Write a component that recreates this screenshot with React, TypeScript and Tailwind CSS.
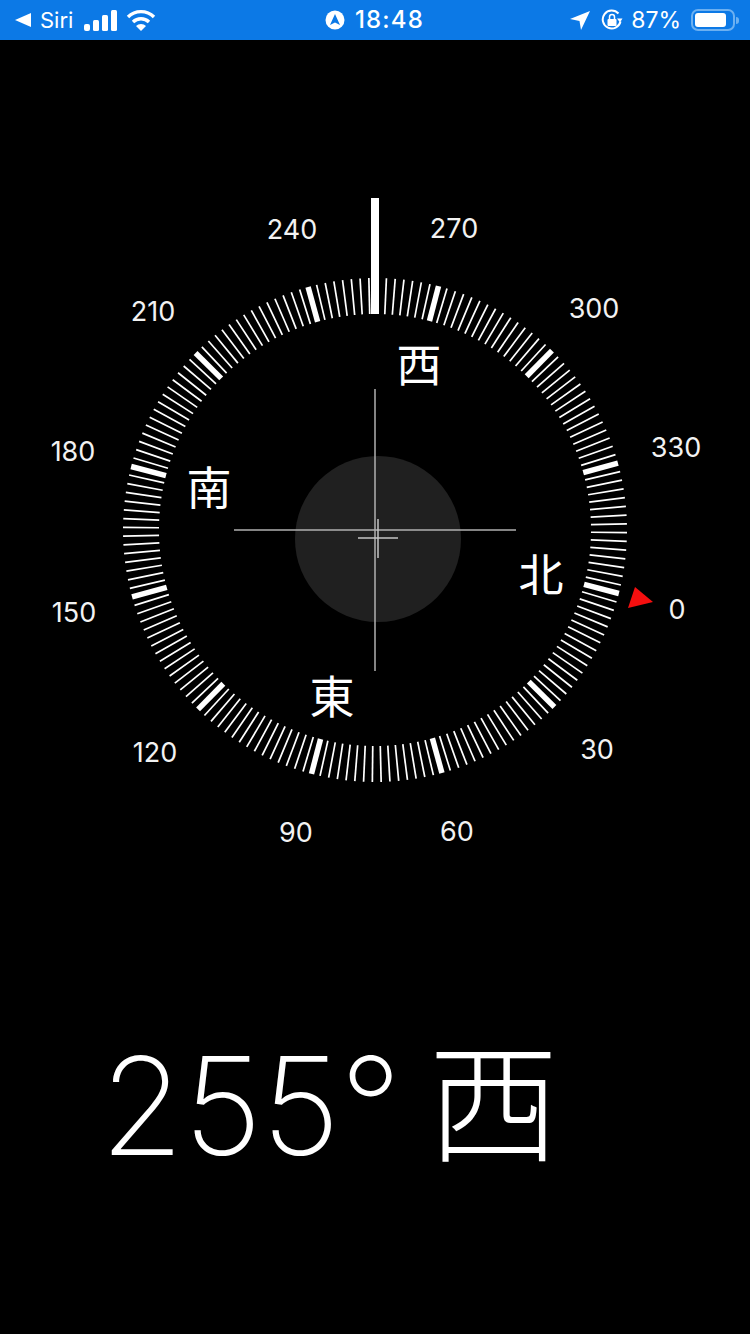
const HEADING = 255.4;
const CX = 375;
const CY = 530;

// degree labels sit at hand-read positions, relative to the page
const LABELS: [string, number, number][] = [
  ["240", 292, 229], ["270", 454, 228], ["210", 153, 311], ["300", 594, 308],
  ["180", 73, 451], ["330", 676, 447], ["150", 74, 612], ["0", 677, 609],
  ["120", 155, 752], ["30", 597, 749], ["90", 296, 832], ["60", 457, 831],
];

const CARDINALS: [string, number, number][] = [
  ["西", 419, 362], ["南", 209, 485], ["北", 541, 572], ["東", 332, 694],
];

function StatusBar() {
  return (
    <div className="flex h-10 items-center bg-[#0c79e6] text-white font-['Inter','Liberation_Sans',sans-serif]">
      <div className="flex flex-1 items-center">
        <svg width="16" height="14" viewBox="0 0 16 14" className="ml-[15px]"><path d="M0 7 16 0v14z" fill="#fff" /></svg>
        <span className="ml-[9px] text-[22px] leading-none font-normal">Siri</span>
        <svg width="33" height="21" viewBox="0 0 33 21" className="ml-[11px]" fill="#fff">
          <rect x="0" y="14" width="6" height="7" rx="2" />
          <rect x="9" y="10" width="6" height="11" rx="1.5" />
          <rect x="18" y="5" width="6" height="16" rx="1.5" />
          <rect x="27" y="0" width="6" height="21" rx="1.5" />
        </svg>
        <svg width="30" height="22" viewBox="0 0 30 22" className="ml-[9px]" fill="none" stroke="#fff" strokeWidth="3.4">
          <path d="M2 8a18.5 18.5 0 0 1 26 0" />
          <path d="M7 13a11.5 11.5 0 0 1 16 0" />
          <path d="M15 22l-5-5a7 7 0 0 1 10 0z" fill="#fff" stroke="none" />
        </svg>
      </div>
      <div className="flex items-center gap-[10px] pl-[10px]">
        <svg width="20" height="20" viewBox="0 0 20 20">
          <circle cx="10" cy="10" r="9.5" fill="#fff" />
          <path d="M10 4 15 15 10 12.5 5 15z" fill="#0c79e6" />
        </svg>
        <span className="text-[24px] leading-none font-medium tracking-[1.2px]">18:48</span>
      </div>
      <div className="flex flex-1 items-center justify-end pr-[11px]">
        <svg width="20" height="20" viewBox="0 0 20 20" fill="#fff"><path d="M20 1 11 20 9.5 11 0 9z" /></svg>
        <svg width="22" height="22" viewBox="0 0 22 22" className="ml-[11px]" fill="none" stroke="#fff" strokeWidth="2">
          <path d="M19.5 12.5A9 9 0 1 1 17.5 4.5" />
          <path d="M21.5 9.5 19 13.5 16 9.5z" fill="#fff" stroke="none" />
          <rect x="6.5" y="10" width="9" height="7" rx="1" fill="#fff" stroke="none" />
          <path d="M8.5 10V8a2.5 2.5 0 0 1 5 0v2" strokeWidth="1.5" />
        </svg>
        <span className="ml-[8px] text-[23px] leading-none font-normal">87%</span>
        <div className="ml-[10px] flex h-[22px] w-[44px] items-center rounded-[7px] border-2 border-[#6cb0f1] p-[2px]">
          <div className="h-full w-[87%] rounded-[3px] bg-white" />
        </div>
        <div className="ml-[1px] h-[7px] w-[3px] rounded-r-full bg-[#6cb0f1]" />
      </div>
    </div>
  );
}

function Ticks() {
  const ticks = [];
  for (let deg = 0; deg < 360; deg += 2) {
    const major = deg % 30 === 0;
    ticks.push(
      <line
        key={deg}
        x1={CX}
        x2={CX}
        y1={CY - 252}
        y2={CY - 216}
        stroke="#fff"
        strokeWidth={major ? 5.5 : 1.7}
        transform={`rotate(${deg - HEADING} ${CX} ${CY})`}
      />
    );
  }
  return (
    <svg width="750" height="900" viewBox="0 0 750 900" className="absolute top-[-40px] left-0">
      {ticks}
      <circle cx="378" cy="539" r="83" fill="#202020" />
      <path d="M375 389V671M234 530H516" stroke="#b0b0b0" strokeWidth="1.5" />
      <path d="M378 519V558M358 538H398" stroke="#c4c4c4" strokeWidth="1.5" />
      <rect x="371" y="198" width="8" height="116" fill="#fff" />
      <path d="M635 587 653 602 628 608z" fill="#f50f0f" />
    </svg>
  );
}

function Dial() {
  return (
    <div className="relative h-[860px] w-full">
      <Ticks />
      {LABELS.map(([text, x, y]) => (
        <span
          key={text}
          className="absolute -translate-x-1/2 -translate-y-1/2 text-[27px] leading-none text-[#f2f2f2] font-['Inter','Liberation_Sans',sans-serif]"
          style={{ left: x, top: y - 40 }}
        >
          {text}
        </span>
      ))}
      {CARDINALS.map(([text, x, y]) => (
        <span
          key={text}
          className="absolute -translate-x-1/2 -translate-y-1/2 text-[45px] leading-none text-white font-['Noto_Sans_CJK_JP','Noto_Sans_CJK_TC',sans-serif]"
          style={{ left: x, top: y - 40 }}
        >
          {text}
        </span>
      ))}
    </div>
  );
}

export default function App() {
  return (
    <div className="h-[1334px] w-[750px] overflow-hidden bg-black">
      <StatusBar />
      <Dial />
      <div className="mt-[138px] flex items-start pl-[100px] text-white">
        <span className="text-[136px] leading-none font-[250] tracking-[-0.5px] font-['Inter','Liberation_Sans',sans-serif]">255°</span>
        <span className="-mt-[8px] ml-[27px] text-[131px] leading-none font-light font-['Noto_Sans_CJK_JP','Noto_Sans_CJK_TC',sans-serif]">西</span>
      </div>
    </div>
  );
}
